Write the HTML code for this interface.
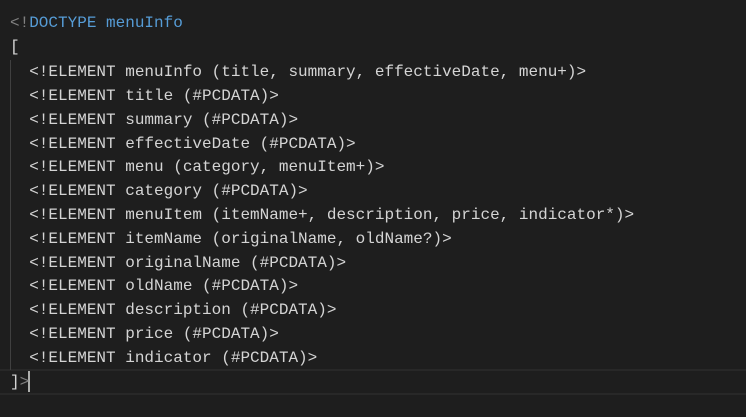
<!DOCTYPE html>
<html><head><style>
body{margin:0;width:746px;height:417px;background:#1e1e1e;overflow:hidden;position:relative}
.l{position:absolute;left:10px;font-family:"Liberation Mono",monospace;font-size:16px;white-space:pre;color:#d4d4d4;line-height:24px}
.g{color:#808080}.b{color:#569cd6}
</style></head><body>
<div style="position:absolute;left:0;top:369px;width:746px;height:22px;border-top:2px solid #282828;border-bottom:2px solid #282828"></div>
<div style="position:absolute;left:10px;top:60px;width:1px;height:310px;background:#404040"></div>
<div style="position:absolute;left:28px;top:371px;width:2px;height:21px;background:#aeafad"></div>
<div class="l" style="top:11px"><span class="g">&lt;!</span><span class="b">DOCTYPE menuInfo</span></div>
<div class="l" style="top:35px">[</div>
<div class="l" style="top:60px">  &lt;!ELEMENT menuInfo (title, summary, effectiveDate, menu+)&gt;</div>
<div class="l" style="top:84px">  &lt;!ELEMENT title (#PCDATA)&gt;</div>
<div class="l" style="top:108px">  &lt;!ELEMENT summary (#PCDATA)&gt;</div>
<div class="l" style="top:132px">  &lt;!ELEMENT effectiveDate (#PCDATA)&gt;</div>
<div class="l" style="top:155px">  &lt;!ELEMENT menu (category, menuItem+)&gt;</div>
<div class="l" style="top:179px">  &lt;!ELEMENT category (#PCDATA)&gt;</div>
<div class="l" style="top:203px">  &lt;!ELEMENT menuItem (itemName+, description, price, indicator*)&gt;</div>
<div class="l" style="top:227px">  &lt;!ELEMENT itemName (originalName, oldName?)&gt;</div>
<div class="l" style="top:251px">  &lt;!ELEMENT originalName (#PCDATA)&gt;</div>
<div class="l" style="top:274px">  &lt;!ELEMENT oldName (#PCDATA)&gt;</div>
<div class="l" style="top:298px">  &lt;!ELEMENT description (#PCDATA)&gt;</div>
<div class="l" style="top:322px">  &lt;!ELEMENT price (#PCDATA)&gt;</div>
<div class="l" style="top:346px">  &lt;!ELEMENT indicator (#PCDATA)&gt;</div>
<div class="l" style="top:370px">]<span class="g">&gt;</span></div>
</body></html>
